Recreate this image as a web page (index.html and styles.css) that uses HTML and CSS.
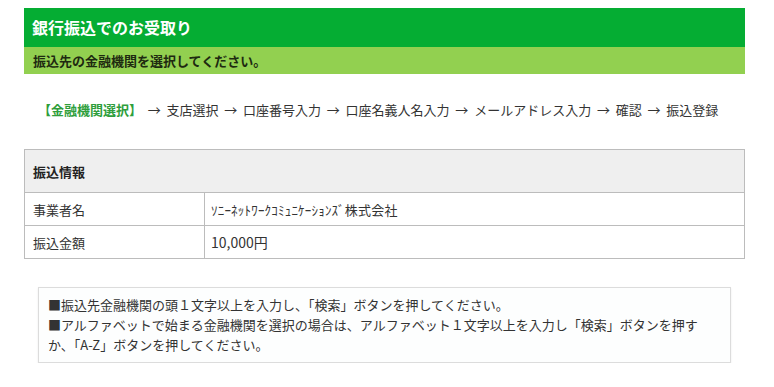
FILE: index.html
```html
<!DOCTYPE html>
<html lang="ja">
<head>
<meta charset="utf-8">
<title>銀行振込でのお受取り</title>
<link rel="stylesheet" href="styles.css">
</head>
<body>
<div class="page">
  <div class="title-bar">銀行振込でのお受取り</div>
  <div class="sub-bar">振込先の金融機関を選択してください。</div>

  <div class="steps"><span class="current">【金融機関選択】</span><span class="arr">→</span>支店選択<span class="arr">→</span>口座番号入力<span class="arr">→</span>口座名義人名入力<span class="arr">→</span>メールアドレス入力<span class="arr">→</span>確認<span class="arr">→</span>振込登録</div>

  <table class="info">
    <tr class="head"><th colspan="2">振込情報</th></tr>
    <tr><td class="label">事業者名</td><td class="value company">ｿﾆｰﾈｯﾄﾜｰｸｺﾐｭﾆｹｰｼｮﾝｽﾞ株式会社</td></tr>
    <tr><td class="label">振込金額</td><td class="value amount">10,000円</td></tr>
  </table>

  <div class="notes">
    <p>■振込先金融機関の頭１文字以上を入力し、「検索」ボタンを押してください。</p>
    <p>■アルファベットで始まる金融機関を選択の場合は、アルファベット１文字以上を入力し「検索」ボタンを押す<br>か、「A-Z」ボタンを押してください。</p>
  </div>
</div>
</body>
</html>
```

FILE: styles.css
```css
html, body {
  margin: 0;
  padding: 0;
  background: #ffffff;
}
body {
  font-family: "Noto Sans CJK JP", "Noto Sans", sans-serif;
  color: #333333;
}
.page {
  margin: 8px 29px 0 24px;
}
.title-bar {
  background: #05ad33;
  color: #ffffff;
  font-size: 16px;
  font-weight: bold;
  height: 39px;
  line-height: 39px;
  padding-left: 8px;
}
.sub-bar {
  background: #92d050;
  color: #1e2a10;
  font-size: 13px;
  font-weight: bold;
  height: 27px;
  line-height: 27px;
  padding-left: 9px;
}
.steps {
  margin: 26px 0 0 14px;
  font-size: 13px;
  line-height: 20px;
  color: #333333;
  white-space: nowrap;
}
.steps .current {
  color: #2f9e3c;
  font-weight: bold;
}
.steps .arr {
  margin: 0 5.75px;
}
.info {
  margin-top: 29px;
  width: 100%;
  border-collapse: collapse;
  font-size: 13px;
}
.info th, .info td {
  border: 1px solid #bcbcbc;
  padding: 0 0 0 8px;
  text-align: left;
}
.info .head th {
  background: #efefef;
  height: 42px;
  font-weight: bold;
  color: #222222;
}
.info td {
  height: 32px;
}
.info .label {
  width: 171px;
}
.info .value {
  padding-left: 6px;
}
.info .company {
  letter-spacing: 0.2px;
}
.info .amount {
  font-size: 14px;
}
.notes {
  margin: 28px 14px 0 14px;
  border: 1px solid #dcdcdc;
  box-shadow: 0 1px 2px rgba(0, 0, 0, 0.08);
  background: #fdfefe;
  padding: 7px 9px;
  font-size: 13px;
  line-height: 20px;
  color: #333333;
}
.notes p {
  margin: 0;
  white-space: nowrap;
}
```
